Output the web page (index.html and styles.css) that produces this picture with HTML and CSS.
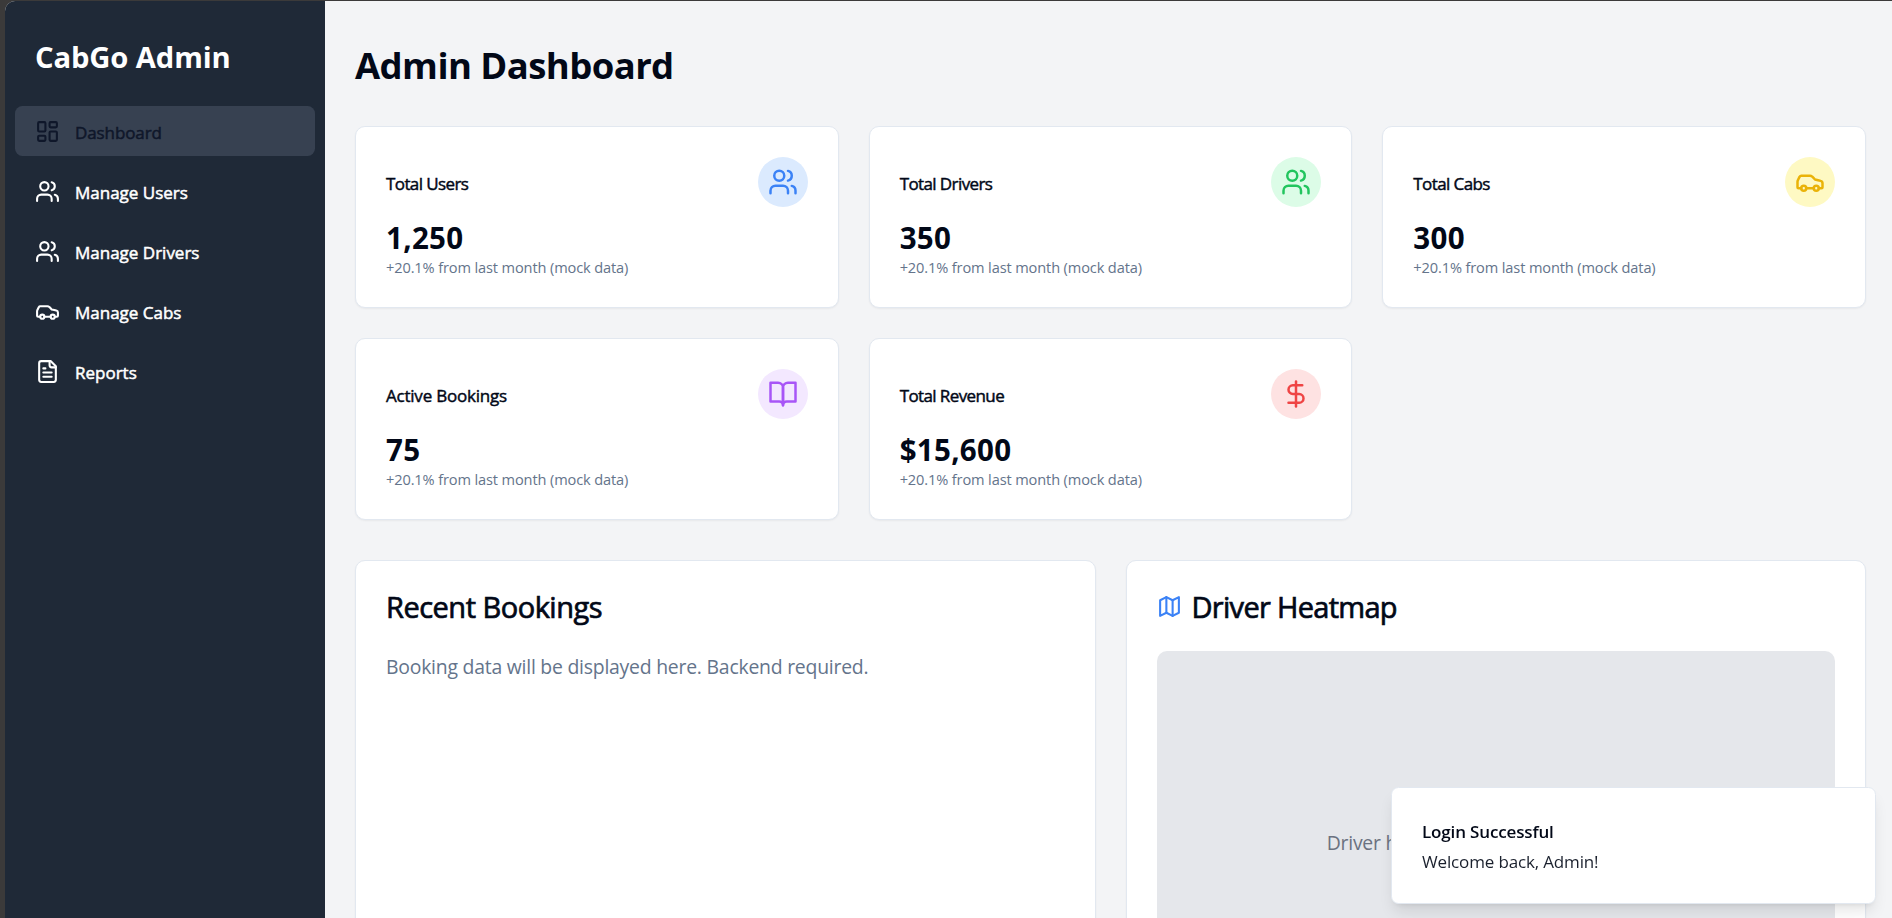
FILE: index.html
```html
<!DOCTYPE html>
<html lang="en">
<head>
<meta charset="utf-8">
<title>CabGo Admin</title>
<link rel="stylesheet" href="styles.css">
</head>
<body>
<svg class="sprite" aria-hidden="true">
  <symbol id="i-dashboard" viewBox="0 0 24 24"><rect width="7" height="9" x="3" y="3" rx="1"/><rect width="7" height="5" x="14" y="3" rx="1"/><rect width="7" height="9" x="14" y="12" rx="1"/><rect width="7" height="5" x="3" y="16" rx="1"/></symbol>
  <symbol id="i-users" viewBox="0 0 24 24"><path d="M16 21v-2a4 4 0 0 0-4-4H6a4 4 0 0 0-4 4v2"/><circle cx="9" cy="7" r="4"/><path d="M22 21v-2a4 4 0 0 0-3-3.87"/><path d="M16 3.13a4 4 0 0 1 0 7.75"/></symbol>
  <symbol id="i-car" viewBox="0 0 24 24"><path d="M19 17h2c.6 0 1-.4 1-1v-3c0-.9-.7-1.7-1.5-1.9C18.700 10.600 16 10 16 10s-1.300-1.400-2.200-2.300c-.5-.4-1.100-.7-1.800-.7H5c-.6 0-1.100.4-1.400.9l-1.400 2.900A3.700 3.700 0 0 0 2 12v4c0 .6.4 1 1 1h2"/><circle cx="7" cy="17" r="2"/><path d="M9 17h6"/><circle cx="17" cy="17" r="2"/></symbol>
  <symbol id="i-file" viewBox="0 0 24 24"><path d="M15 2H6a2 2 0 0 0-2 2v16a2 2 0 0 0 2 2h12a2 2 0 0 0 2-2V7Z"/><path d="M14 2v4a2 2 0 0 0 2 2h4"/><path d="M10 9H8"/><path d="M16 13H8"/><path d="M16 17H8"/></symbol>
  <symbol id="i-book" viewBox="0 0 24 24"><path d="M2 3h6a4 4 0 0 1 4 4v14a3 3 0 0 0-3-3H2z"/><path d="M22 3h-6a4 4 0 0 0-4 4v14a3 3 0 0 1 3-3h7z"/></symbol>
  <symbol id="i-dollar" viewBox="0 0 24 24"><path d="M12 2v20"/><path d="M17 5H9.500a3.500 3.500 0 0 0 0 7h5a3.500 3.500 0 0 1 0 7H6"/></symbol>
  <symbol id="i-map" viewBox="0 0 24 24"><path d="M3 6l6-3 6 3 6-3v15l-6 3-6-3-6 3z"/><path d="M9 3v15"/><path d="M15 6v15"/></symbol>
</svg>

<div class="app">
  <aside class="sidebar">
    <div class="brand">CabGo Admin</div>
    <nav class="nav">
      <a class="nav-item active"><svg class="icon"><use href="#i-dashboard"/></svg><span>Dashboard</span></a>
      <a class="nav-item"><svg class="icon"><use href="#i-users"/></svg><span>Manage Users</span></a>
      <a class="nav-item"><svg class="icon"><use href="#i-users"/></svg><span>Manage Drivers</span></a>
      <a class="nav-item"><svg class="icon"><use href="#i-car"/></svg><span>Manage Cabs</span></a>
      <a class="nav-item"><svg class="icon"><use href="#i-file"/></svg><span>Reports</span></a>
    </nav>
  </aside>

  <main class="main">
    <h1 class="page-title">Admin Dashboard</h1>

    <section class="stats">
      <article class="card">
        <header class="stat-head"><h3 class="stat-label total">Total Users</h3><div class="badge blue"><svg class="icon"><use href="#i-users"/></svg></div></header>
        <div class="stat-value">1,250</div>
        <p class="stat-note">+20.1% from last month (mock data)</p>
      </article>
      <article class="card">
        <header class="stat-head"><h3 class="stat-label total">Total Drivers</h3><div class="badge green"><svg class="icon"><use href="#i-users"/></svg></div></header>
        <div class="stat-value">350</div>
        <p class="stat-note">+20.1% from last month (mock data)</p>
      </article>
      <article class="card">
        <header class="stat-head"><h3 class="stat-label total">Total Cabs</h3><div class="badge yellow"><svg class="icon"><use href="#i-car"/></svg></div></header>
        <div class="stat-value">300</div>
        <p class="stat-note">+20.1% from last month (mock data)</p>
      </article>
      <article class="card">
        <header class="stat-head"><h3 class="stat-label">Active Bookings</h3><div class="badge purple"><svg class="icon"><use href="#i-book"/></svg></div></header>
        <div class="stat-value">75</div>
        <p class="stat-note">+20.1% from last month (mock data)</p>
      </article>
      <article class="card">
        <header class="stat-head"><h3 class="stat-label total">Total Revenue</h3><div class="badge red"><svg class="icon"><use href="#i-dollar"/></svg></div></header>
        <div class="stat-value">$15,600</div>
        <p class="stat-note">+20.1% from last month (mock data)</p>
      </article>
    </section>

    <section class="panels">
      <article class="card">
        <h2 class="panel-title"><span>Recent Bookings</span></h2>
        <p class="panel-text">Booking data will be displayed here. Backend required.</p>
      </article>
      <article class="card">
        <h2 class="panel-title heatmap-title"><svg class="icon"><use href="#i-map"/></svg><span>Driver Heatmap</span></h2>
        <div class="heatmap">Driver heatmap will be displayed here.</div>
      </article>
    </section>
  </main>
</div>

<div class="toast" role="status">
  <div class="toast-title">Login Successful</div>
  <div class="toast-text">Welcome back, Admin!</div>
</div>
</body>
</html>
```
FILE: styles.css
```css
* { box-sizing: border-box; margin: 0; }

body {
  height: 918px;
  padding: 1px 0 0 5px;
  overflow: hidden;
  background: #3b3a3a;
  color: #020817;
  font-family: "Segoe UI", "Open Sans", "Noto Sans", sans-serif;
}

.sprite { display: none; }

.icon {
  flex: none;
  width: 25px;
  height: 25px;
  fill: none;
  stroke: currentColor;
  stroke-width: 2;
  stroke-linecap: round;
  stroke-linejoin: round;
}

.app {
  display: flex;
  height: 917px;
  overflow: hidden;
  border-radius: 10px 0 0 0;
  background: #f3f4f6;
}

/* Sidebar */
.sidebar {
  flex: none;
  width: 320px;
  padding: 36px 10px 0;
  background: #1f2937;
  color: #fff;
}

.brand {
  padding-left: 20px;
  font-size: 29.2px;
  font-weight: 700;
  line-height: 40px;
  letter-spacing: -0.12px;
}

.nav {
  display: grid;
  gap: 10px;
  margin-top: 29px;
}

.nav-item {
  display: flex;
  align-items: center;
  gap: 15px;
  height: 50px;
  padding: 0 20px;
  border-radius: 7.5px;
  font-size: 17px;
  font-weight: 500;
}

.nav-item span {
  padding-top: 2px;
  -webkit-text-stroke: 0.5px currentColor;
}

.nav-item.active {
  background: #374151;
  color: #0f172a;
}

.nav-item.active span { letter-spacing: -0.1px; }

/* Main column */
.main {
  flex: 1;
  min-width: 0;
  padding: 42px 26px 0 30px;
}

.page-title {
  margin-bottom: 38px;
  font-size: 36.5px;
  font-weight: 700;
  line-height: 45px;
  letter-spacing: -0.58px;
}

.card {
  padding: 30px;
  border: 1px solid #e2e8f0;
  border-radius: 10px;
  background: #fff;
  box-shadow: 0 1px 2px rgba(0, 0, 0, 0.05);
}

.stats {
  display: grid;
  grid-template-columns: repeat(3, 1fr);
  gap: 30px;
}

.stat-head {
  display: flex;
  align-items: center;
  justify-content: space-between;
  margin-bottom: 10px;
}

.stat-label {
  padding-top: 3px;
  font-size: 17px;
  font-weight: 500;
  letter-spacing: -0.22px;
  -webkit-text-stroke: 0.45px currentColor;
}

.stat-label.total { letter-spacing: -0.6px; }

.badge {
  display: flex;
  align-items: center;
  justify-content: center;
  width: 50px;
  height: 50px;
  border-radius: 50%;
}

.badge .icon { width: 30px; height: 30px; }
.blue { background: #dbeafe; color: #3b82f6; }
.green { background: #dcfce7; color: #22c55e; }
.yellow { background: #fef9c3; color: #eab308; }
.purple { background: #f3e8ff; color: #a855f7; }
.red { background: #fee2e2; color: #ef4444; }

.stat-value {
  height: 40px;
  padding-top: 1px;
  font-size: 29.5px;
  font-weight: 700;
  line-height: 40px;
  letter-spacing: 0.3px;
}

.stat-note {
  color: #64748b;
  font-size: 14.6px;
  line-height: 20px;
  letter-spacing: -0.13px;
}

.panels {
  display: grid;
  grid-template-columns: repeat(2, 1fr);
  gap: 30px;
  margin-top: 40px;
}

.panel-title {
  height: 30px;
  margin-bottom: 30px;
  font-size: 29px;
  font-weight: 500;
  line-height: 32px;
  letter-spacing: -0.5px;
}

.panel-title span { -webkit-text-stroke: 0.7px currentColor; }

.heatmap-title {
  display: flex;
  align-items: center;
  gap: 10px;
  letter-spacing: -0.7px;
}

.heatmap-title .icon { color: #3b82f6; }
.heatmap-title span { padding-top: 1px; }

.panel-text,
.heatmap {
  font-size: 19.4px;
  line-height: 32px;
  letter-spacing: -0.23px;
}

.panel-text { color: #64748b; }

.heatmap {
  display: flex;
  align-items: center;
  justify-content: center;
  height: 384px;
  border-radius: 10px;
  background: #e5e7eb;
  color: #6b7280;
}

/* Notification over the page */
.toast {
  position: fixed;
  right: 16px;
  bottom: 14px;
  width: 485px;
  padding: 31px 30px 29px;
  border: 1px solid #e2e8f0;
  border-radius: 7.5px;
  background: #fff;
  box-shadow: 0 10px 15px -3px rgba(0, 0, 0, 0.1), 0 4px 6px -4px rgba(0, 0, 0, 0.1);
  font-size: 17px;
  line-height: 25px;
  letter-spacing: -0.15px;
}

.toast-title { font-weight: 600; }

.toast-text {
  margin-top: 5px;
  opacity: 0.9;
}
```
